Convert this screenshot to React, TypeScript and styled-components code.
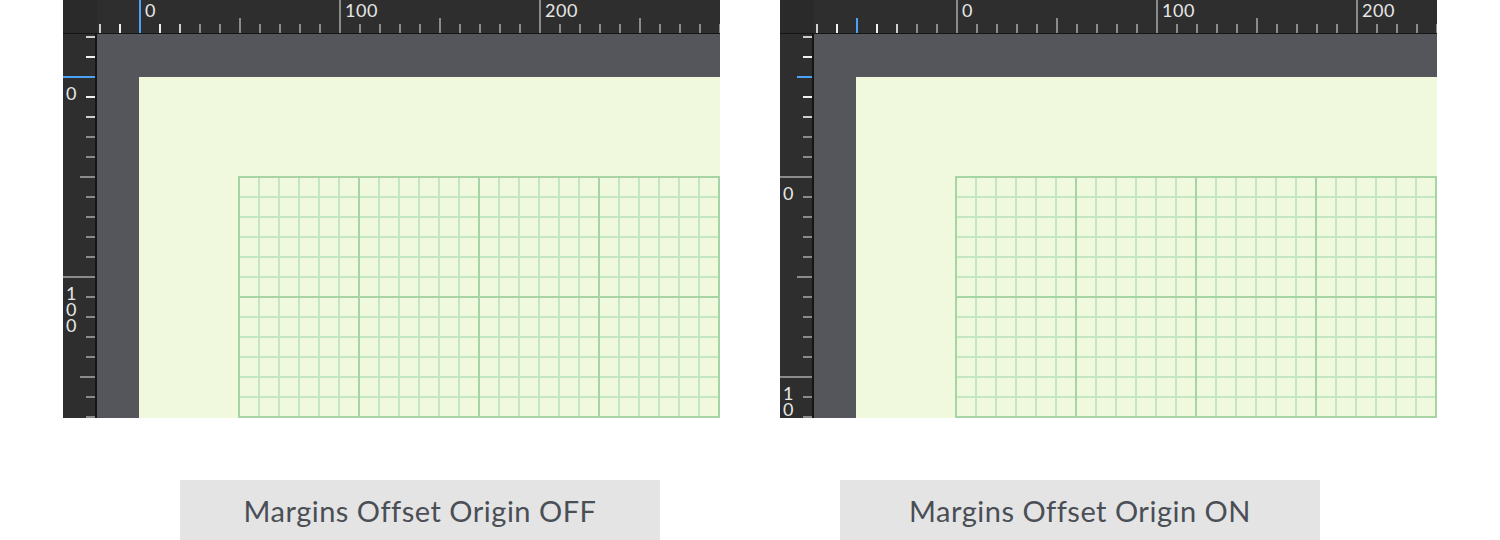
import styled, { createGlobalStyle } from 'styled-components';

const PANEL_W = 657;
const PANEL_H = 418;
const RULER = 34;
const STEP = 20; // 20px per 10 units

const GlobalStyle = createGlobalStyle`
  *, *::before, *::after { box-sizing: border-box; }
  html, body { margin: 0; background: #ffffff; }
`;

type Tick = { pos: number; value: number; kind: 'small' | 'mid' | 'major' };

function makeTicks(origin: number, length: number): Tick[] {
  const list: Tick[] = [];
  const first = Math.ceil((2 - origin) / STEP);
  const last = Math.floor((length - origin) / STEP);
  for (let k = first; k <= last; k++) {
    const value = k * 10;
    const kind = value % 100 === 0 ? 'major' : value % 50 === 0 ? 'mid' : 'small';
    list.push({ pos: origin + k * STEP, value, kind });
  }
  return list;
}

// ticks close to the page-edge marker are lit
function tickColor(pos: number, marker: number) {
  const d = Math.abs(pos - marker);
  if (d === 0) return '#4ba2f6';
  if (d <= 20) return '#f2f2f2';
  if (d <= 40) return '#cdcdcd';
  return '#8b8b8b';
}

function TopRuler({ origin, marker }: { origin: number; marker: number }) {
  const w = PANEL_W - RULER;
  const h = 33;
  const ticks = makeTicks(origin, w);
  return (
    <RulerSvg width={w} height={h}>
      {ticks.map((t) => {
        const len = t.kind === 'major' ? h : t.kind === 'mid' ? 15 : 9;
        return (
          <rect key={t.pos} x={t.pos - 1} y={h - len} width={2} height={len} fill={tickColor(t.pos, marker)} />
        );
      })}
      {ticks
        .filter((t) => t.kind === 'major' && t.value >= 0)
        .map((t) => (
          <text key={`l${t.pos}`} x={t.pos + 5} y={17}>
            {t.value}
          </text>
        ))}
    </RulerSvg>
  );
}

function SideRuler({ origin, marker }: { origin: number; marker: number }) {
  const w = 32;
  const h = PANEL_H - RULER;
  const ticks = makeTicks(origin, h);
  return (
    <RulerSvg width={w} height={h}>
      {ticks.map((t) => {
        const len = t.kind === 'major' ? w : t.kind === 'mid' ? 15 : 9;
        return (
          <rect key={t.pos} x={w - len} y={t.pos - 1} width={len} height={2} fill={tickColor(t.pos, marker)} />
        );
      })}
      {ticks
        .filter((t) => t.kind === 'major' && t.value >= 0)
        .map((t) => (
          <text key={`l${t.pos}`} textAnchor="middle">
            {String(t.value)
              .split('')
              .map((ch, i) => (
                <tspan key={i} x={8.5} y={t.pos + 23 + i * 16}>
                  {ch}
                </tspan>
              ))}
          </text>
        ))}
    </RulerSvg>
  );
}

function CanvasPanel({ originX, originY, markerX, markerY }: { originX: number; originY: number; markerX: number; markerY: number }) {
  return (
    <Panel>
      <Corner />
      <TopBar>
        <TopRuler origin={originX} marker={markerX} />
      </TopBar>
      <SideBar>
        <SideRuler origin={originY} marker={markerY} />
      </SideBar>
      <Pasteboard>
        <Sheet>
          <MarginGrid />
        </Sheet>
      </Pasteboard>
    </Panel>
  );
}

export default function App() {
  return (
    <>
      <GlobalStyle />
      <Screen>
        <PanelRow>
          <CanvasPanel originX={43} originY={43} markerX={43} markerY={43} />
          <CanvasPanel originX={143} originY={143} markerX={43} markerY={43} />
        </PanelRow>
        <ButtonRow>
          <ModeButton>Margins Offset Origin OFF</ModeButton>
          <ModeButton>Margins Offset Origin ON</ModeButton>
        </ButtonRow>
      </Screen>
    </>
  );
}

const Screen = styled.main`
  width: 1500px;
  height: 540px;
  display: flex;
  flex-direction: column;
  overflow: hidden;
`;

const PanelRow = styled.div`
  display: flex;
  justify-content: center;
  gap: 60px;
`;

const Panel = styled.div`
  display: grid;
  grid-template-columns: ${RULER}px 1fr;
  grid-template-rows: ${RULER}px 1fr;
  width: ${PANEL_W}px;
  height: ${PANEL_H}px;
  overflow: hidden;
`;

const Corner = styled.div`
  background: #2a2a2a;
  border-bottom: 1px solid #151515;
`;

const TopBar = styled.div`
  background: #2e2e2e;
  border-bottom: 1px solid #151515;
  overflow: hidden;
`;

const SideBar = styled.div`
  background: #2e2e2e;
  border-right: 2px solid #151515;
  overflow: hidden;
`;

const RulerSvg = styled.svg`
  display: block;

  text {
    font-family: Lato, 'DejaVu Sans', sans-serif;
    font-size: 18px;
    fill: #e6e6e6;
    letter-spacing: 0.5px;
  }
`;

const Pasteboard = styled.div`
  display: flex;
  background: #55565b;
  padding: 43px 0 0 42px;
  overflow: hidden;
`;

const Sheet = styled.div`
  flex: 1;
  display: flex;
  background: #f0f9de;
  padding: 99px 0 0 99px;
`;

const MarginGrid = styled.div`
  flex: 1;
  background-image: linear-gradient(to right, #a7d4a5 2px, transparent 2px),
    linear-gradient(to bottom, #a7d4a5 2px, transparent 2px),
    linear-gradient(to right, #c3e7c1 2px, transparent 2px),
    linear-gradient(to bottom, #c3e7c1 2px, transparent 2px);
  background-size: 120px 120px, 120px 120px, 20px 20px, 20px 20px;
`;

const ButtonRow = styled.div`
  display: flex;
  justify-content: center;
  gap: 180px;
  margin-top: 62px;
`;

const ModeButton = styled.div`
  width: 480px;
  height: 60px;
  display: flex;
  align-items: center;
  justify-content: center;
  background: #e4e4e4;
  font-family: Lato, 'Liberation Sans', sans-serif;
  font-size: 29px;
  letter-spacing: 0.5px;
  color: #4a4e55;
`;
